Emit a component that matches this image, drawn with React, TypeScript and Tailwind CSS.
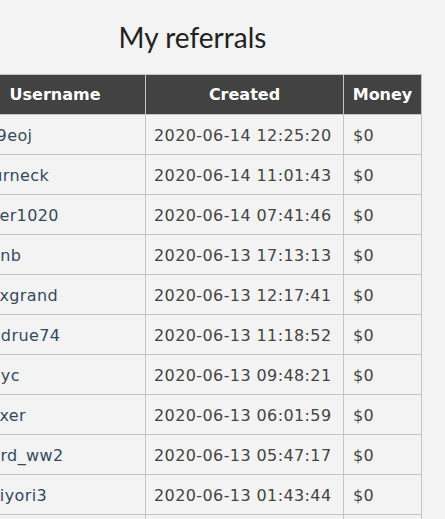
const referrals = [
  { username: "Bo9eoj", created: "2020-06-14 12:25:20", money: "$0" },
  { username: "Sturneck", created: "2020-06-14 11:01:43", money: "$0" },
  { username: "Joker1020", created: "2020-06-14 07:41:46", money: "$0" },
  { username: "Ivonb", created: "2020-06-13 17:13:13", money: "$0" },
  { username: "Maxgrand", created: "2020-06-13 12:17:41", money: "$0" },
  { username: "Jandrue74", created: "2020-06-13 11:18:52", money: "$0" },
  { username: "Jonyc", created: "2020-06-13 09:48:21", money: "$0" },
  { username: "Maxer", created: "2020-06-13 06:01:59", money: "$0" },
  { username: "Ward_ww2", created: "2020-06-13 05:47:17", money: "$0" },
  { username: "Ichiyori3", created: "2020-06-13 01:43:44", money: "$0" },
  { username: "Pelkan88", created: "2020-06-12 23:10:05", money: "$0" },
];

export default function App() {
  return (
    <div className="h-[519px] overflow-hidden bg-[#f3f3f3]">
      <div className="ml-[-36px] w-[457px]">
        <h1 className="pt-[16px] pb-[15px] text-center font-['Lato','Open_Sans',sans-serif] text-[28px] leading-[43px] text-[#222]">
          My referrals
        </h1>
        <table className="w-[457px] table-fixed border-collapse font-['DejaVu_Sans','Verdana',sans-serif] text-[16px] tracking-[0.4px]">
          <colgroup>
            <col className="w-[181px]" />
            <col className="w-[198px]" />
            <col className="w-[78px]" />
          </colgroup>
          <thead>
            <tr className="h-[40px] bg-[#424242] text-white">
              <th className="border border-[#c4c4c4] px-[10px] text-center font-bold tracking-normal">Username</th>
              <th className="border border-[#c4c4c4] px-[10px] text-center font-bold tracking-normal">Created</th>
              <th className="border border-[#c4c4c4] px-[4px] text-center font-bold tracking-normal">Money</th>
            </tr>
          </thead>
          <tbody>
            {referrals.map((r) => (
              <tr key={r.username} className="h-[40px]">
                <td className="whitespace-nowrap border border-[#c4c4c4] pt-[2px] pl-[10px] pr-[10px] text-[#34495e]">{r.username}</td>
                <td className="whitespace-nowrap border border-[#c4c4c4] pt-[2px] pl-[8px] pr-[10px] text-[#444]">{r.created}</td>
                <td className="whitespace-nowrap border border-[#c4c4c4] pt-[2px] pl-[9px] pr-[4px] text-[#444]">{r.money}</td>
              </tr>
            ))}
          </tbody>
        </table>
      </div>
    </div>
  );
}
